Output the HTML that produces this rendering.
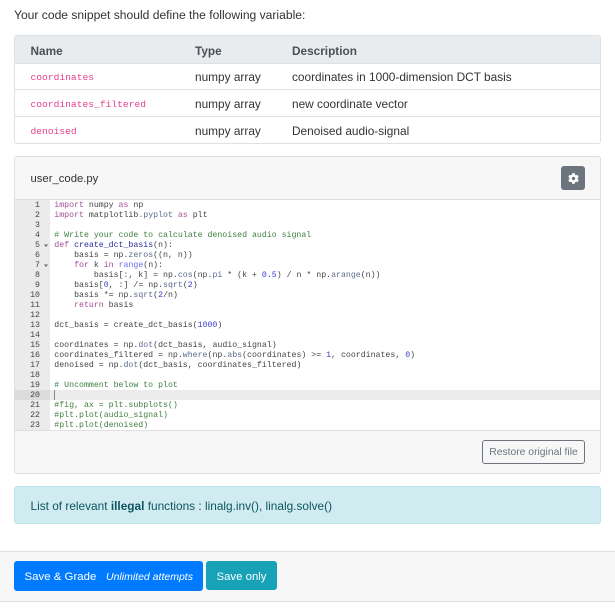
<!DOCTYPE html>
<html><head><meta charset="utf-8">
<style>
html,body{margin:0;padding:0;background:#fff;width:615px;height:608px;overflow:hidden}
body{position:relative;font-family:"Liberation Sans",sans-serif;font-size:11.85px;color:#333}
.a{position:absolute;white-space:nowrap}
.box{position:absolute;box-sizing:border-box;border:1px solid #dee2e6;border-radius:3px}
.line{position:absolute;left:15px;width:585px;height:1px;background:#dee2e6}
.th{font-weight:bold;color:#495057;font-size:11.8px}
.pink{font-family:"Liberation Mono",monospace;font-size:9.63px;color:#e83e8c}
.c{position:absolute;left:54.3px;height:10px;line-height:10px;margin-top:1px;font-family:"Liberation Mono",monospace;font-size:8.24px;color:#444;white-space:pre}
.n{position:absolute;left:15px;width:25px;text-align:right;height:10px;line-height:10px;margin-top:1px;font-family:"Liberation Mono",monospace;font-size:8.24px;color:#444}
.k{color:#a04f96}.m{color:#3f7f40}.d{color:#3a3acd}.f{color:#5a6a8c}.e{color:#2a2aa2}.b{color:#6a6ef0}
</style></head><body>
<div class="a" style="left:14px;top:8px;line-height:15px;font-size:12.1px">Your code snippet should define the following variable:</div>

<div class="box" style="left:14px;top:35px;width:587px;height:109px"></div>
<div class="a" style="left:15px;top:36px;width:585px;height:28px;background:#e9ecef;border-radius:2px 2px 0 0"></div>
<div class="line" style="top:63px"></div>
<div class="line" style="top:89px"></div>
<div class="line" style="top:116px"></div>
<div class="a th" style="left:30.5px;top:44px;line-height:15px">Name</div>
<div class="a th" style="left:195px;top:44px;line-height:15px">Type</div>
<div class="a th" style="left:292px;top:44px;line-height:15px">Description</div>
<div class="a pink" style="left:30.5px;top:70px;line-height:15px">coordinates</div>
<div class="a" style="left:195px;top:70px;line-height:15px">numpy array</div>
<div class="a" style="left:292px;top:70px;line-height:15px">coordinates in 1000-dimension DCT basis</div>
<div class="a pink" style="left:30.5px;top:97px;line-height:15px">coordinates_filtered</div>
<div class="a" style="left:195px;top:97px;line-height:15px">numpy array</div>
<div class="a" style="left:292px;top:97px;line-height:15px">new coordinate vector</div>
<div class="a pink" style="left:30.5px;top:124px;line-height:15px">denoised</div>
<div class="a" style="left:195px;top:124px;line-height:15px">numpy array</div>
<div class="a" style="left:292px;top:124px;line-height:15px">Denoised audio-signal</div>

<div class="box" style="left:14px;top:156px;width:587px;height:318px;background:#f7f7f7;border-color:#dfdfdf"></div>
<div class="a" style="left:15px;top:199px;width:585px;height:1px;background:#dfdfdf"></div>
<div class="a" style="left:30.5px;top:172px;line-height:15px;font-size:11.3px">user_code.py</div>
<div class="a" style="left:561px;top:166px;width:24px;height:24px;background:#6c757d;border-radius:3px"></div>
<svg class="a" style="left:568px;top:172.5px" width="11" height="11" viewBox="0 0 512 512"><path fill="#fff" d="M487.4 315.7l-42.6-24.6c4.3-23.2 4.3-47 0-70.2l42.6-24.6c4.9-2.8 7.1-8.6 5.5-14-11.1-35.6-30-67.8-54.7-94.6-3.8-4.1-10-5.1-14.8-2.3L380.8 110c-17.9-15.4-38.5-27.3-60.8-35.1V25.8c0-5.6-3.9-10.5-9.4-11.7-36.7-8.2-74.3-7.8-109.2 0-5.5 1.2-9.4 6.1-9.4 11.7V75c-22.2 7.9-42.8 19.8-60.8 35.1L88.7 85.5c-4.9-2.8-11-1.9-14.8 2.3-24.7 26.7-43.6 58.9-54.7 94.6-1.7 5.4.6 11.2 5.5 14L67.3 221c-4.3 23.2-4.3 47 0 70.2l-42.6 24.6c-4.9 2.8-7.1 8.6-5.5 14 11.1 35.6 30 67.8 54.7 94.6 3.8 4.1 10 5.1 14.8 2.3l42.6-24.6c17.9 15.4 38.5 27.3 60.8 35.1v49.2c0 5.6 3.9 10.5 9.4 11.7 36.7 8.2 74.3 7.8 109.2 0 5.5-1.2 9.4-6.1 9.4-11.7v-49.2c22.2-7.9 42.8-19.8 60.8-35.1l42.6 24.6c4.9 2.8 11 1.9 14.8-2.3 24.7-26.7 43.6-58.9 54.7-94.6 1.5-5.5-.7-11.3-5.6-14.1zM256 336c-44.1 0-80-35.9-80-80s35.9-80 80-80 80 35.9 80 80-35.9 80-80 80z"/></svg>

<div class="a" style="left:15px;top:200px;width:585px;height:230px;background:#fff;overflow:hidden"></div>
<div class="a" style="left:15px;top:200px;width:35px;height:230px;background:#ebebeb"></div>
<div class="a" style="left:50px;top:390px;width:550px;height:10px;background:#ececec"></div>
<div class="a" style="left:15px;top:390px;width:35px;height:10px;background:#dcdcdc"></div>
<div class="a" style="left:54px;top:390px;width:1px;height:10px;background:#888"></div>
<div class="a" style="left:15px;top:430px;width:585px;height:1px;background:#dfdfdf"></div>

<div class="n" style="top:200px">1</div><div class="c" style="top:200px"><span class="k">import</span> numpy <span class="k">as</span> np</div>
<div class="n" style="top:210px">2</div><div class="c" style="top:210px"><span class="k">import</span> matplotlib<span class="f">.pyplot</span> <span class="k">as</span> plt</div>
<div class="n" style="top:220px">3</div>
<div class="n" style="top:230px">4</div><div class="c m" style="top:230px"># Write your code to calculate denoised audio signal</div>
<div class="n" style="top:240px">5</div><div class="c" style="top:240px"><span class="k">def</span> <span class="e">create_dct_basis</span>(n):</div>
<div class="n" style="top:250px">6</div><div class="c" style="top:250px">    basis = np.<span class="f">zeros</span>((n, n))</div>
<div class="n" style="top:260px">7</div><div class="c" style="top:260px">    <span class="k">for</span> k <span class="k">in</span> <span class="b">range</span>(n):</div>
<div class="n" style="top:270px">8</div><div class="c" style="top:270px">        basis[:, k] = np.<span class="f">cos</span>(np.<span class="f">pi</span> * (k + <span class="d">0.5</span>) / n * np.<span class="f">arange</span>(n))</div>
<div class="n" style="top:280px">9</div><div class="c" style="top:280px">    basis[<span class="d">0</span>, :] /= np.<span class="f">sqrt</span>(<span class="d">2</span>)</div>
<div class="n" style="top:290px">10</div><div class="c" style="top:290px">    basis *= np.<span class="f">sqrt</span>(<span class="d">2</span>/n)</div>
<div class="n" style="top:300px">11</div><div class="c" style="top:300px">    <span class="k">return</span> basis</div>
<div class="n" style="top:310px">12</div>
<div class="n" style="top:320px">13</div><div class="c" style="top:320px">dct_basis = create_dct_basis(<span class="d">1000</span>)</div>
<div class="n" style="top:330px">14</div>
<div class="n" style="top:340px">15</div><div class="c" style="top:340px">coordinates = np.<span class="f">dot</span>(dct_basis, audio_signal)</div>
<div class="n" style="top:350px">16</div><div class="c" style="top:350px">coordinates_filtered = np.<span class="f">where</span>(np.<span class="f">abs</span>(coordinates) &gt;= <span class="d">1</span>, coordinates, <span class="d">0</span>)</div>
<div class="n" style="top:360px">17</div><div class="c" style="top:360px">denoised = np.<span class="f">dot</span>(dct_basis, coordinates_filtered)</div>
<div class="n" style="top:370px">18</div>
<div class="n" style="top:380px">19</div><div class="c m" style="top:380px"># Uncomment below to plot</div>
<div class="n" style="top:390px">20</div>
<div class="n" style="top:400px">21</div><div class="c m" style="top:400px">#fig, ax = plt.subplots()</div>
<div class="n" style="top:410px">22</div><div class="c m" style="top:410px">#plt.plot(audio_signal)</div>
<div class="n" style="top:420px">23</div><div class="c m" style="top:420px">#plt.plot(denoised)</div>
<svg class="a" style="left:43px;top:242px" width="6" height="30"><path d="M1 2.5h4l-2 2.5zM1 22.5h4l-2 2.5z" fill="#666"/></svg>

<div class="a" style="left:482px;top:440px;width:103px;height:24px;box-sizing:border-box;border:1px solid #6c757d;border-radius:3px;color:#6c757d;font-size:10.35px;line-height:23px;text-align:center">Restore original file</div>

<div class="a" style="left:14px;top:486px;width:587px;height:38px;box-sizing:border-box;background:#d1ecf1;border:1px solid #bee5eb;border-radius:3px"></div>
<div class="a" style="left:30.5px;top:499px;line-height:15px;color:#0c5460;font-size:11.85px">List of relevant <b>illegal</b> functions : linalg.inv(), linalg.solve()</div>

<div class="a" style="left:0;top:551px;width:615px;height:51px;box-sizing:border-box;background:#f7f7f7;border-top:1px solid #dfdfdf;border-bottom:1px solid #dfdfdf"></div>
<div class="a" style="left:14px;top:561px;width:189px;height:30px;background:#007bff;border-radius:3px"></div>
<div class="a" style="left:24.5px;top:570px;line-height:15px;color:#fff;font-size:11.45px">Save &amp; Grade</div>
<div class="a" style="left:106px;top:570px;line-height:14px;color:#fff;font-size:10.5px;font-style:italic">Unlimited attempts</div>
<div class="a" style="left:206px;top:561px;width:71px;height:29px;background:#17a2b8;border-radius:3px;color:#fff;text-align:center;line-height:32px;font-size:11.4px">Save only</div>
</body></html>
